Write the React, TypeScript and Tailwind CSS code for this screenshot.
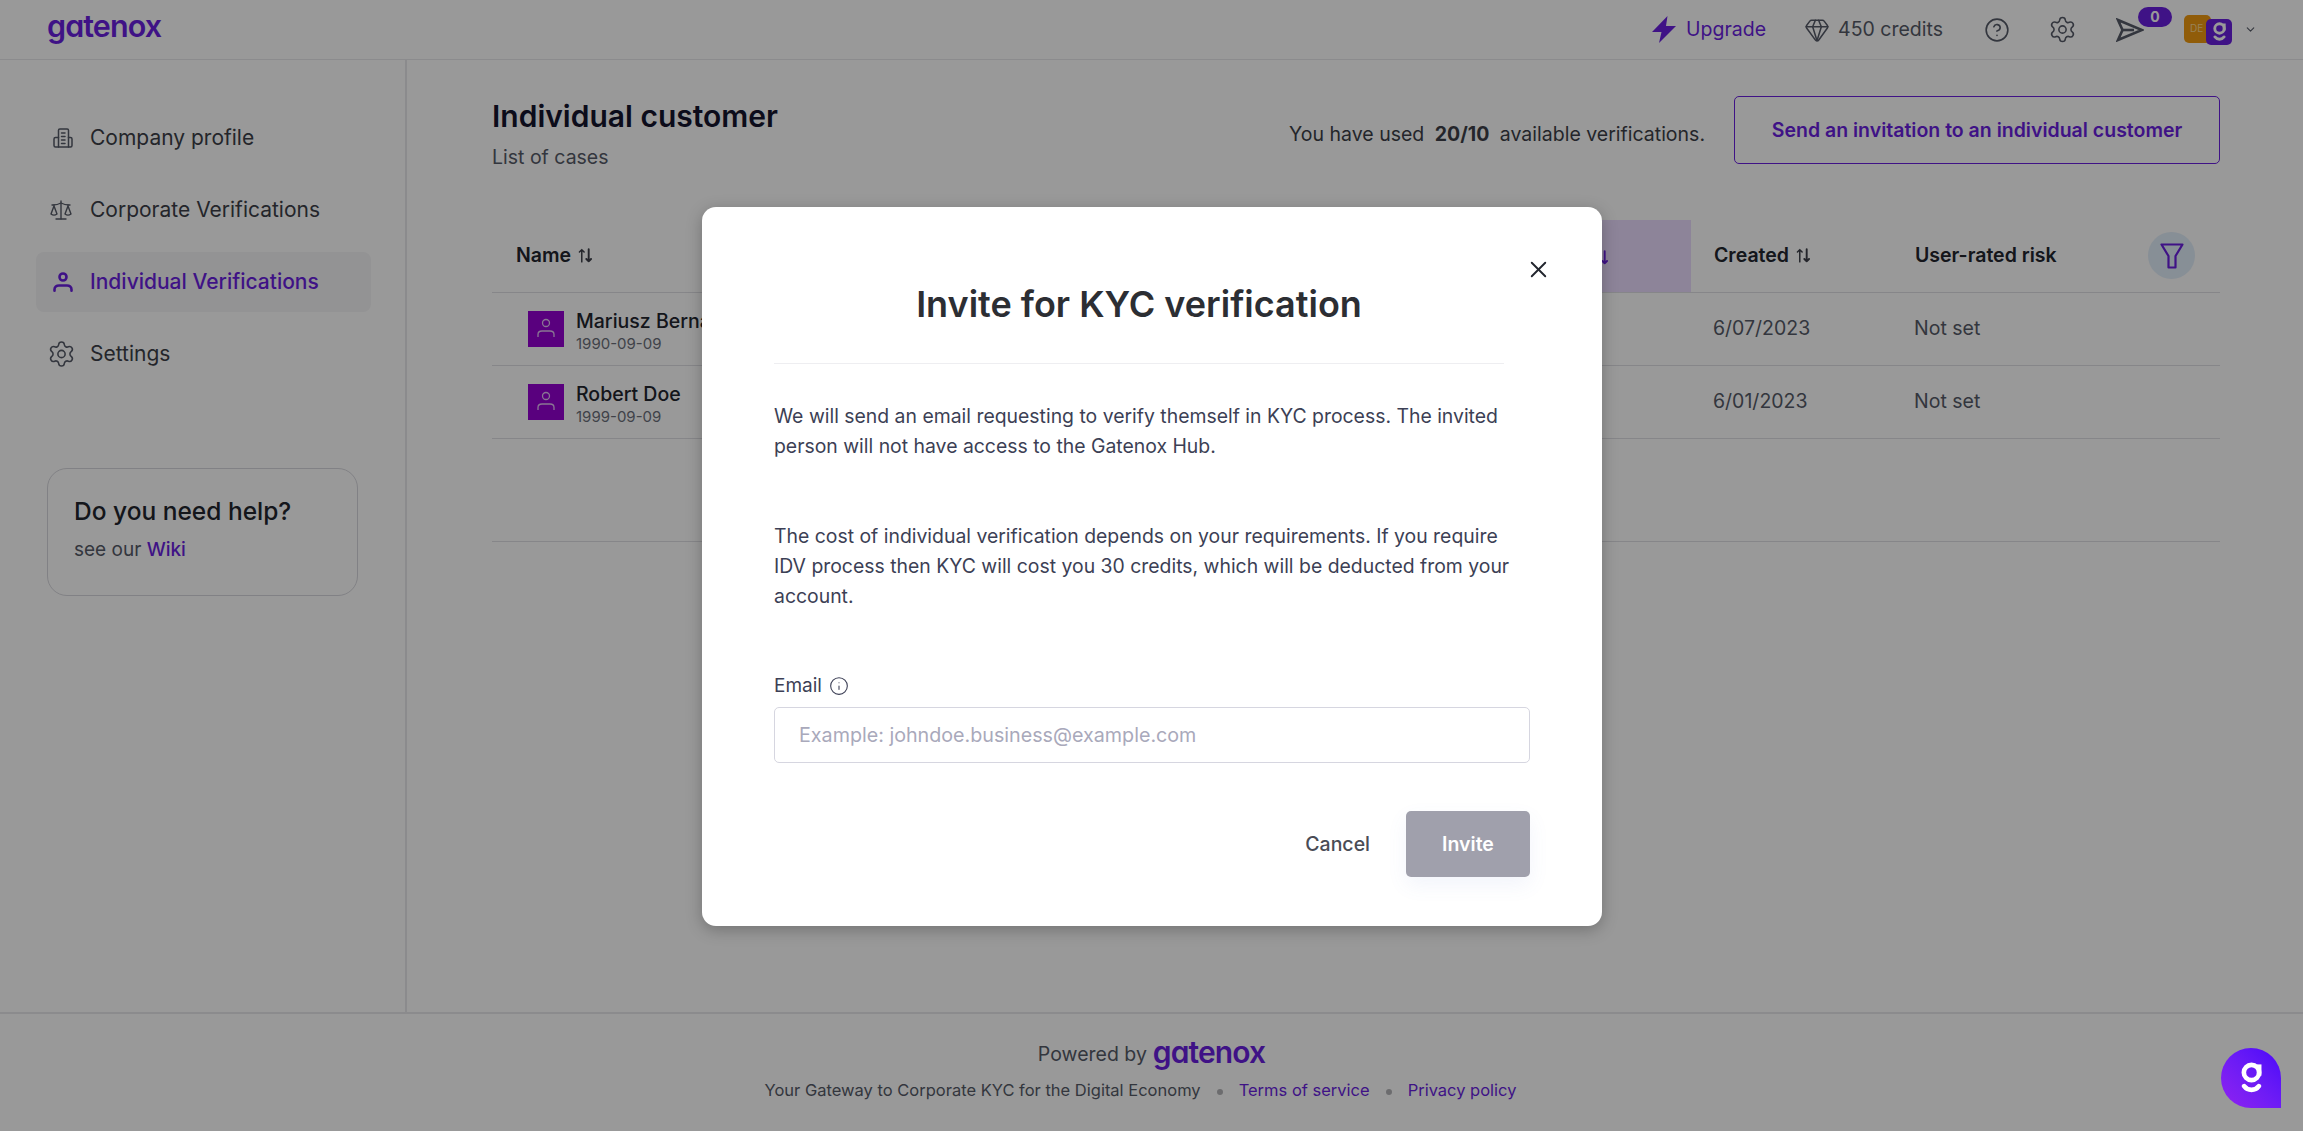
import React from "react";
import { Scale, Settings, Gem, CircleHelp, ChevronDown, X, Info } from "lucide-react";

const font = { fontFamily: "Inter, 'Liberation Sans', sans-serif" };

function Logo({ className }: { className: string }) {
  return <span className={`font-semibold text-[#6a1fe0] tracking-[-0.03em] leading-none [font-feature-settings:'cv11'] ${className}`}>gatenox</span>;
}

function GMark({ size }: { size: number }) {
  return (
    <svg width={size} height={size * 1.5} viewBox="0 0 20 30" fill="none" stroke="#ffffff" strokeWidth="4.400" strokeLinecap="round">
      <circle cx="10" cy="10" r="7.300" />
      <path d="M17.300 2.300V13" strokeLinecap="butt" />
      <path d="M3 23c1.800 2.500 4.300 3.500 7 3.500s5.200-1 7-3.500" />
    </svg>
  );
}

function Building() {
  return (
    <svg width="20" height="20" viewBox="0 0 20 20" fill="none" stroke="#565b68" strokeWidth="1.500" strokeLinejoin="round" strokeLinecap="round">
      <path d="M5.500 19V2.300c0-.8.500-1.300 1.300-1.300h7.400c.8 0 1.300.5 1.300 1.300V19" />
      <path d="M5.500 9.500H2.500C1.700 9.500 1 10.200 1 11v6.500C1 18.300 1.700 19 2.500 19h15c.8 0 1.500-.7 1.500-1.500V11c0-.8-.7-1.500-1.500-1.500h-2" />
      <path d="M8.500 5h3.500M8.500 8.500h3.500M8.500 12h3.500M8.500 15.500h3.500" />
    </svg>
  );
}

function PersonBold() {
  return (
    <svg width="20" height="20" viewBox="0 0 20 20" fill="none" stroke="#6a1fe0" strokeWidth="2.600" strokeLinecap="round">
      <circle cx="10" cy="5" r="3.500" />
      <path d="M1.500 18.700v-1.200c0-2.500 2-4 4.500-4h8c2.500 0 4.500 1.500 4.500 4v1.200" />
    </svg>
  );
}

function Sort({ color = "#3c3f48" }: { color?: string }) {
  return (
    <svg width="17" height="17" viewBox="0 0 16 16" fill="none" stroke={color} strokeWidth="1.400" strokeLinecap="round" strokeLinejoin="round">
      <path d="M4.500 14V2.500M2.300 4.700l2.200-2.200 2.200 2.200" />
      <path d="M11 2v11.500M8.800 11.300l2.200 2.200 2.200-2.200" strokeWidth="1.800" />
    </svg>
  );
}

function Bolt() {
  return (
    <svg width="24" height="27" viewBox="0 0 24 27" fill="#6a1fe0">
      <path d="M15.500 0 0 16h9.500L7 27l17-17H14z" />
    </svg>
  );
}

function SendIcon() {
  return (
    <svg width="28" height="24" viewBox="0 0 28 24" fill="none" stroke="#565b68" strokeWidth="2.600">
      <path d="M2 2 26 12 2 22 6.500 12z" />
      <path d="M6.500 12H18" />
    </svg>
  );
}

function FunnelIcon() {
  return (
    <svg width="24" height="26" viewBox="0 0 24 26" fill="none" stroke="#6a1fe0" strokeWidth="2.200" strokeLinejoin="round">
      <path d="M1.500 1.500h21L15.500 13v11.500h-7V13z" />
    </svg>
  );
}

function Avatar() {
  return (
    <div className="w-[36px] h-[36px] bg-[#9400d3] flex items-center justify-center shrink-0">
      <svg width="20" height="24" viewBox="0 0 20 24" fill="none" stroke="#e5c5f5" strokeWidth="1.300">
        <circle cx="10" cy="6" r="3.500" />
        <path d="M2 20v-2.500C2 15 4 14 6 14h8c2 0 4 1 4 3.500V20" />
      </svg>
    </div>
  );
}

const nav = [
  { label: "Company profile", icon: <span className="ml-[3px] flex"><Building /></span> },
  { label: "Corporate Verifications", icon: <Scale size={24} strokeWidth={1.400} color="#565b68" className="-ml-[1px]" /> },
  { label: "Individual Verifications", icon: <span className="ml-[3px] flex"><PersonBold /></span>, active: true },
  { label: "Settings", icon: <Settings size={30} strokeWidth={1.300} color="#565b68" className="-ml-[3px]" /> },
];

const rows = [
  { name: "Mariusz Bernacki", dob: "1990-09-09", created: "6/07/2023" },
  { name: "Robert Doe", dob: "1999-09-09", created: "6/01/2023" },
];

export default function App() {
  return (
    <div style={font} className="relative h-[1131px] w-full overflow-hidden bg-white flex flex-col text-[#22252e]">
      <header className="h-[60px] shrink-0 border-b border-[#e8e8ec] flex items-center pl-[47px] pr-[46px]">
        <Logo className="text-[30.500px] -mt-[6px]" />
        <div className="ml-auto flex items-center">
          <Bolt />
          <span className="ml-[10px] text-[19.500px] text-[#6a1fe0]">Upgrade</span>
          <Gem size={26} strokeWidth={1.400} color="#565b68" className="ml-[38px]" />
          <span className="ml-[8px] text-[19.500px] text-[#565b68]">450 credits</span>
          <CircleHelp size={26} strokeWidth={1.500} color="#565b68" className="ml-[41px]" />
          <Settings size={29} strokeWidth={1.300} color="#565b68" className="ml-[38px]" />
          <div className="relative ml-[39px] flex">
            <SendIcon />
            <span className="absolute -top-[11px] left-[22px] w-[34px] h-[20px] rounded-full bg-[#6a1fe0] text-white text-[14px] font-bold flex items-center justify-center">0</span>
          </div>
          <div className="relative ml-[40px] w-[48px] h-[30px]">
            <span className="absolute left-0 top-0 w-[27px] h-[28px] rounded-[5px] bg-[#f09a10] text-[#ffd98f] text-[10px] flex items-center pl-[6px]">DE</span>
            <span className="absolute left-[22px] top-[4px] w-[26px] h-[26px] rounded-[5px] bg-[#6a1fe0] flex items-center justify-center"><GMark size={13} /></span>
          </div>
          <ChevronDown size={13} color="#565b68" className="ml-[12px]" />
        </div>
      </header>

      <div className="flex-1 flex min-h-0">
        <aside className="w-[407px] shrink-0 border-r-2 border-[#e8e8ec] pt-[48px] pl-[36px]">
          <nav className="w-[335px] flex flex-col gap-[12px]">
            {nav.map((n) => (
              <div key={n.label} className={`h-[60px] rounded-[8px] flex items-center pl-[14px] ${n.active ? "bg-[#f5f5f7]" : ""}`}>
                <span className="w-[26px] flex items-center">{n.icon}</span>
                <span className={`ml-[14px] text-[21px] ${n.active ? "font-medium text-[#6a1fe0]" : "text-[#3c3f48]"}`}>{n.label}</span>
              </div>
            ))}
          </nav>
          <div className="ml-[11px] mt-[84px] w-[311px] h-[128px] rounded-[20px] border border-[#d8d8de] px-[26px] pt-[27px]">
            <div className="text-[24.500px] font-medium leading-[30px] text-[#22252e]">Do you need help?</div>
            <div className="mt-[11px] text-[19px] leading-[26px] text-[#565b68]">see our <span className="text-[#6a1fe0] font-medium">Wiki</span></div>
          </div>
        </aside>

        <main className="flex-1 pl-[85px] pr-[83px] pt-[36px]">
          <div className="flex items-start h-[124px]">
            <div>
              <h1 className="text-[30px] font-semibold leading-[40px] text-[#14152e]">Individual customer</h1>
              <p className="mt-[8px] text-[19.500px] leading-[26px] text-[#565b68]">List of cases</p>
            </div>
            <div className="ml-auto flex items-start">
              <p className="mt-[25px] text-[19.500px] text-[#3c3f48] leading-[26px]">You have used <b className="font-bold mx-[5px]">20/10</b> available verifications.</p>
              <button className="ml-[29px] w-[486px] h-[68px] pt-[1px] rounded-[5px] border-[1.500px] border-[#6a1fe0] text-[#6a1fe0] text-[19.500px] font-semibold">Send an invitation to an individual customer</button>
            </div>
          </div>
          <div className="border-b border-[#e0e0e4] h-[73px] flex items-center text-[19.500px] font-semibold relative">
            <span className="flex items-center gap-[6px] pl-[24px] -mt-[1px]">Name <Sort /></span>
            <div className="ml-auto w-[300px] h-full bg-[#ecdcff] flex items-center overflow-hidden">
              <span className="ml-[202px] mt-[3px]"><Sort color="#6a1fe0" /></span>
            </div>
            <span className="w-[225px] flex items-center gap-[6px] pl-[23px] -mt-[1px]">Created <Sort /></span>
            <span className="w-[305px] flex items-center -mt-[1px] -ml-[1px]">User-rated risk</span>
            <span className="absolute right-[25px] top-[12px] w-[47px] h-[47px] rounded-full bg-[#e2eefa] flex items-center justify-center">
              <FunnelIcon />
            </span>
          </div>
          {rows.map((r) => (
            <div key={r.name} className="h-[73px] border-b border-[#e0e0e4] flex items-center">
              <div className="ml-[36px] flex items-center gap-[12px]">
                <Avatar />
                <div className="pt-[5px]">
                  <div className="text-[19.500px] leading-[24px] font-medium text-[#22252e]">{r.name}</div>
                  <div className="text-[15px] leading-[22px] text-[#6b6f7a]">{r.dob}</div>
                </div>
              </div>
              <span className="ml-auto w-[530px] pl-[23px] flex text-[19.500px] text-[#565b68]">
                <span className="w-[201px]">{r.created}</span>
                <span>Not set</span>
              </span>
            </div>
          ))}
          <div className="h-[103px] border-b border-[#e0e0e4]" />
        </main>
      </div>

      <footer className="h-[119px] shrink-0 border-t-2 border-[#e8e8ec] flex flex-col items-center pt-[26px]">
        <div className="flex items-center gap-[6px]">
          <span className="text-[19.500px] text-[#565b68]">Powered by</span>
          <Logo className="text-[30px] -mt-[6px]" />
        </div>
        <div className="mt-[9px] mr-[22px] flex items-center text-[16.500px] leading-[24px]">
          <span className="text-[#565b68]">Your Gateway to Corporate KYC for the Digital Economy</span>
          <span className="mx-[16px] w-[6px] h-[6px] rounded-full bg-[#b5b5b8] mt-1" />
          <span className="text-[#6a1fe0]">Terms of service</span>
          <span className="mx-[16px] w-[6px] h-[6px] rounded-full bg-[#b5b5b8] mt-1" />
          <span className="text-[#6a1fe0]">Privacy policy</span>
        </div>
      </footer>

      <div className="absolute inset-0 bg-black/40 z-40" />

      <div className="absolute inset-0 z-50 flex justify-center pt-[207px] pl-[1px]">
        <div className="relative w-[900px] h-[719px] bg-white rounded-[14px] shadow-[0_4px_16px_rgba(0,0,0,0.25)] px-[72px]">
          <X size={27} strokeWidth={1.700} color="#22252e" className="absolute right-[50px] top-[49px]" />
          <div className="w-[730px] h-[157px] border-b border-[#eeeef1] flex justify-center pt-[72px]">
            <h2 className="text-[36px] font-semibold leading-[50px] text-[#2c2e33]">Invite for KYC verification</h2>
          </div>
          <p className="w-[730px] mt-[37px] text-[19.400px] leading-[30px] text-[#3c3f55]">We will send an email requesting to verify themself in KYC process. The invited person will not have access to the Gatenox Hub.</p>
          <p className="w-[745px] mt-[60px] text-[19.400px] leading-[30px] text-[#3c3f55]">The cost of individual verification depends on your requirements. If you require IDV process then KYC will cost you 30 credits, which will be deducted from your account.</p>
          <div className="mt-[60px] flex items-center gap-[7px] text-[19px] leading-[30px] text-[#3c3f55]">Email <Info size={20} strokeWidth={1.300} /></div>
          <input readOnly placeholder="Example: johndoe.business@example.com" className="mt-[6px] w-full h-[56px] rounded-[5px] border border-[#d6d6e0] px-[24px] text-[19.700px] outline-none placeholder:text-[#a9a9bb]" />
          <div className="mt-[48px] flex justify-end items-center">
            <button className="text-[19.500px] font-medium text-[#4a4c55] mr-[36px] pt-[1px]">Cancel</button>
            <button className="w-[124px] h-[66px] pt-[1px] rounded-[5px] bg-[#a0a0ac] text-white text-[19.500px] font-semibold shadow-[0_8px_20px_rgba(90,110,200,0.08)]">Invite</button>
          </div>
        </div>
      </div>

      <div className="absolute right-[22px] bottom-[23px] z-[60] w-[60px] h-[60px] rounded-t-full rounded-bl-full rounded-br-[5px] bg-gradient-to-tr from-[#9020f0] to-[#4a00fa] flex items-center justify-center">
        <GMark size={21} />
      </div>
    </div>
  );
}
